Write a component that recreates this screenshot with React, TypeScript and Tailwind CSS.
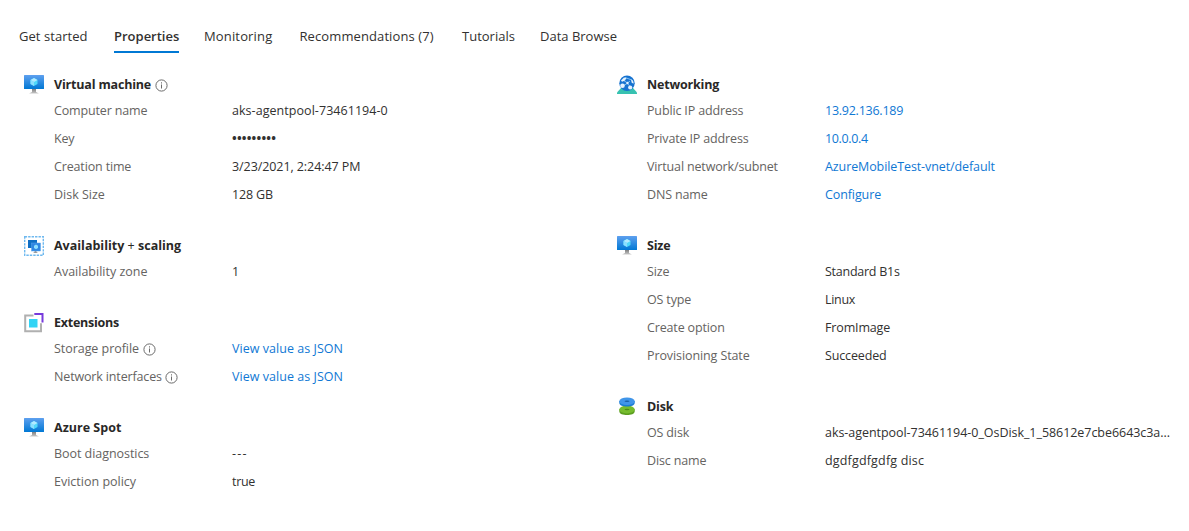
import type { ReactNode } from 'react';

function MonitorIcon() {
  return (
    <svg width="20" height="20" viewBox="0 0 20 20" className="block">
      <defs>
        <linearGradient id="screen" x1="0" y1="0" x2="0" y2="1">
          <stop offset="0" stopColor="#5ea0ef" />
          <stop offset="1" stopColor="#0078d4" />
        </linearGradient>
        <linearGradient id="stand" x1="0" y1="0" x2="0" y2="1">
          <stop offset="0" stopColor="#707070" />
          <stop offset="1" stopColor="#c8c8c8" />
        </linearGradient>
      </defs>
      <path d="M8 13h4v4l3 1.500H5L8 17z" fill="url(#stand)" />
      <rect width="20" height="14" y="0" rx="0.500" fill="url(#screen)" />
      <path d="M10 3l3.500 2v4L10 11 6.500 9V5z" fill="#50d8fa" />
      <path d="M10 3l3.500 2L10 7 6.500 5z" fill="#b3eaff" />
      <path d="M6.500 5L10 7v4L6.500 9z" fill="#8cdfff" />
    </svg>
  );
}

function ScaleIcon() {
  return (
    <svg width="20" height="20" viewBox="0 0 20 20" className="block">
      <rect x="0.700" y="0.700" width="18.600" height="18.600" fill="none" stroke="#6fb9ef" strokeWidth="1.400" strokeDasharray="2.400 1.050" />
      <rect x="4" y="4" width="9" height="8" fill="#0f6fc5" />
      <path d="M10.500 14h2v2l1.500 1H9l1.500-1z" fill="#999" />
      <rect x="7.500" y="7" width="9" height="8" fill="#2f86e2" stroke="#5aa5ec" strokeWidth="0.500" />
      <path d="M12 8.500l2 1.200v2.300l-2 1.200-2-1.200V9.700z" fill="#8edfff" />
    </svg>
  );
}

function ExtensionIcon() {
  return (
    <svg width="20" height="20" viewBox="0 0 20 20" className="block">
      <path d="M9.500 2.500H1.200v15.800h15.800v-8" fill="none" stroke="#b0b0b0" strokeWidth="2" />
      <path d="M10.300 1h8.200v8.500" fill="none" stroke="#773adc" strokeWidth="2" />
      <rect x="5" y="6" width="8.500" height="8.500" fill="#32d4f5" />
    </svg>
  );
}

function NetworkIcon() {
  return (
    <svg width="20" height="20" viewBox="0 0 20 20" className="block">
      <path d="M4 13h12l4 4.500v1.500H0v-1.500z" fill="#37c2b1" />
      <circle cx="10" cy="8.300" r="7.700" fill="#1672d0" />
      <g stroke="#8dc8f5" strokeWidth="0.900" fill="none">
        <path d="M6 5l4.500 3M13 6l-2.500 2M10 8.500L6 11M10.500 8.500l3 3.500M8 2.500L15 5" />
      </g>
      <g fill="#e3f2fd">
        <path d="M4 5.500L7 2.500l2.500.5L8 5.500 5 6.800z" />
        <circle cx="10.500" cy="8" r="1.200" />
        <circle cx="5.500" cy="10.800" r="2.300" />
        <circle cx="13.200" cy="12.500" r="2.100" />
        <path d="M14 4.500l2 1 .8 3-2-.5z" />
      </g>
    </svg>
  );
}

function DiskIcon() {
  return (
    <svg width="20" height="20" viewBox="0 0 20 20" className="block">
      <path d="M2.300 12.300v2.200c0 4.800 15.400 4.800 15.400 0v-2.200z" fill="#5c9e20" />
      <ellipse cx="10" cy="12.500" rx="7.700" ry="3.900" fill="#76bc2d" />
      <ellipse cx="10" cy="12.500" rx="2.500" ry="0.800" fill="#4d8a19" />
      <path d="M2.300 4v2c0 4.700 15.400 4.700 15.400 0V4z" fill="#1b7cd2" />
      <ellipse cx="10" cy="4.200" rx="7.700" ry="3.800" fill="#4095e9" />
      <ellipse cx="10" cy="4.200" rx="2.500" ry="0.800" fill="#175fa5" />
    </svg>
  );
}

function InfoIcon() {
  return (
    <svg width="13" height="13" viewBox="0 0 13 13" className="ml-[3.500px] block shrink-0">
      <circle cx="6.500" cy="6.500" r="5.600" fill="none" stroke="#6b6b6b" strokeWidth="1" />
      <path d="M6.500 5.500v4M6.500 3.300v1.200" stroke="#6b6b6b" strokeWidth="1" />
    </svg>
  );
}

type Row = { label: string; value: string; link?: boolean; info?: boolean; track?: string; labelTrack?: string };

function Section({ icon, title, info, rows, titleTrack = 'tracking-[-0.18px]' }: { icon: ReactNode; title: ReactNode; info?: boolean; rows: Row[]; titleTrack?: string }) {
  return (
    <section className="mb-[23px]">
      <div className="flex h-[26px] items-center">
        <span className="mr-2.5 mt-0.5 w-5 shrink-0">{icon}</span>
        <h2 className={`mt-0.5 font-bold text-[#292827] ${titleTrack}`}>{title}</h2>
        {info && <span className="mt-0.5"><InfoIcon /></span>}
      </div>
      {rows.map((r) => (
        <div key={r.label} className="flex h-7 items-center pl-[30px]">
          <div className="flex w-[178px] shrink-0 items-center text-[#656361]">
            <span className={r.labelTrack ?? 'tracking-[-0.15px]'}>{r.label}</span>
            {r.info && <InfoIcon />}
          </div>
          {r.link ? (
            <a className={`whitespace-nowrap text-[#0f78d4] ${r.track ?? ''}`}>{r.value}</a>
          ) : (
            <span className={`whitespace-nowrap text-[#323130] ${r.track ?? ''}`}>{r.value}</span>
          )}
        </div>
      ))}
    </section>
  );
}

export default function App() {
  return (
    <div className="h-[531px] w-[1189px] overflow-hidden bg-white font-['Open_Sans','Noto_Sans',sans-serif] text-[12.5px] leading-[18px]">
      <nav className="flex h-[71px] items-start pl-[19px] pt-[27px] text-[13px] text-[#323130]">
        <span className="w-[95px] tracking-[0.05px]">Get started</span>
        <span className="mr-[25px] h-[26px] w-[65px] whitespace-nowrap border-b-2 border-[#0078d4] font-semibold">Properties</span>
        <span className="w-[95.500px] tracking-[0.15px]">Monitoring</span>
        <span className="w-[162.500px] tracking-[0.1px]">Recommendations (7)</span>
        <span className="w-[78px]">Tutorials</span>
        <span>Data Browse</span>
      </nav>
      <main className="flex pl-6">
        <div className="w-[593px] shrink-0">
          <Section icon={<MonitorIcon />} title="Virtual machine" info rows={[
            { label: 'Computer name', value: 'aks-agentpool-73461194-0', track: 'tracking-[0.05px]' },
            { label: 'Key', value: '•••••••••', track: 'font-bold tracking-[0.2px]' },
            { label: 'Creation time', value: '3/23/2021, 2:24:47 PM', track: 'tracking-[-0.08px]' },
            { label: 'Disk Size', value: '128 GB', labelTrack: 'tracking-normal', track: 'tracking-[-0.15px]' },
          ]} />
          <Section icon={<ScaleIcon />} title={<>Availability <span className="font-normal">+</span> scaling</>} titleTrack="tracking-normal" rows={[{ label: 'Availability zone', value: '1', labelTrack: 'tracking-normal' }]} />
          <Section icon={<ExtensionIcon />} title="Extensions" titleTrack="tracking-[-0.25px]" rows={[
            { label: 'Storage profile', value: 'View value as JSON', info: true, link: true, labelTrack: 'tracking-[-0.05px]', track: 'tracking-[0.04px]' },
            { label: 'Network interfaces', value: 'View value as JSON', info: true, link: true, track: 'tracking-[0.04px]' },
          ]} />
          <Section icon={<MonitorIcon />} title="Azure Spot" titleTrack="tracking-[0.02px]" rows={[
            { label: 'Boot diagnostics', value: '---', labelTrack: 'tracking-[-0.05px]', track: 'tracking-[1.2px]' },
            { label: 'Eviction policy', value: 'true', labelTrack: 'tracking-normal', track: 'tracking-[-0.3px]' },
          ]} />
        </div>
        <div className="shrink-0">
          <Section icon={<NetworkIcon />} title="Networking" rows={[
            { label: 'Public IP address', value: '13.92.136.189', link: true, track: 'tracking-[-0.25px]' },
            { label: 'Private IP address', value: '10.0.0.4', link: true, track: 'tracking-[-0.35px]' },
            { label: 'Virtual network/subnet', value: 'AzureMobileTest-vnet/default', link: true, track: 'tracking-[-0.1px]' },
            { label: 'DNS name', value: 'Configure', link: true, track: 'tracking-[-0.1px]' },
          ]} />
          <Section icon={<MonitorIcon />} title="Size" rows={[
            { label: 'Size', value: 'Standard B1s', track: 'tracking-[-0.25px]' },
            { label: 'OS type', value: 'Linux', track: 'tracking-[-0.3px]' },
            { label: 'Create option', value: 'FromImage', track: 'tracking-[-0.15px]' },
            { label: 'Provisioning State', value: 'Succeeded', labelTrack: 'tracking-[-0.1px]', track: 'tracking-[-0.15px]' },
          ]} />
          <Section icon={<DiskIcon />} title="Disk" rows={[
            { label: 'OS disk', value: 'aks-agentpool-73461194-0_OsDisk_1_58612e7cbe6643c3a...', track: 'tracking-[-0.05px]' },
            { label: 'Disc name', value: 'dgdfgdfgdfg disc', track: 'tracking-[0.17px]' },
          ]} />
        </div>
      </main>
    </div>
  );
}
